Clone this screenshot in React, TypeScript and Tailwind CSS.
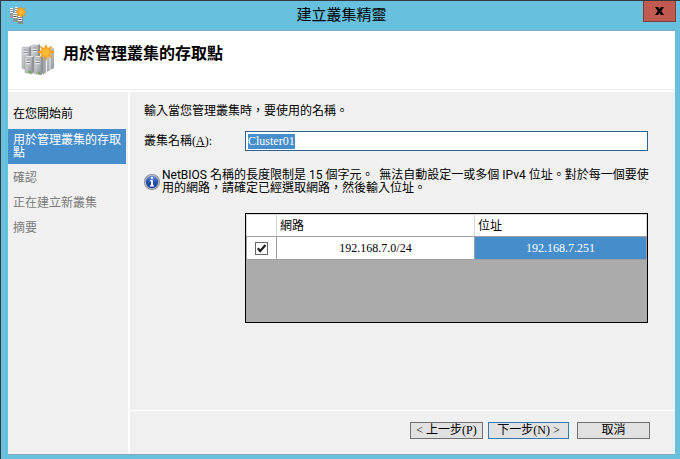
import React, { useEffect, useRef, useState } from "react";

interface Step {
  label: string;
  state: "done" | "current" | "pending";
}

const steps: Step[] = [
  { label: "在您開始前", state: "done" },
  { label: "用於管理叢集的存取點", state: "current" },
  { label: "確認", state: "pending" },
  { label: "正在建立新叢集", state: "pending" },
  { label: "摘要", state: "pending" },
];

const stepStyles = {
  done: "text-black py-1.5",
  current: "bg-[#468dcb] text-white pt-[5px] pb-1 my-0.5",
  pending: "text-[#7a7a7a] py-1.5",
};

interface TowerProps {
  x: number;
  y: number;
  h: number;
}

// One server: light front, darker side, drive bays and a green power light
const Tower: React.FC<TowerProps> = ({ x, y, h }) => (
  <g transform={`translate(${x} ${y})`}>
    <path d="M0 1.5 L2 0 H9 L7 1.5 Z" fill="#e9ebed" />
    <path d={`M7 1.5 L9 0 V${h - 2} L7 ${h} Z`} fill="#8b9095" />
    <path d={`M0 1.5 H7 V${h} L0 ${h - 1.5} Z`} fill="url(#steel)" stroke="#9ca1a5" strokeWidth="0.5" />
    <path d="M1.5 4 H5.5 M1.5 6.5 H5.5" stroke="#7b8187" strokeWidth="0.9" />
    <path d="M1.5 5.2 H5.5 M1.5 7.7 H5.5" stroke="#f7f8f8" strokeWidth="0.8" />
    <circle cx="5" cy={h - 2} r="1" fill="#56b51d" />
  </g>
);

const IconPaints = () => (
  <defs>
    <linearGradient id="steel" x1="0" y1="0" x2="1" y2="1">
      <stop offset="0" stopColor="#dfe1e3" />
      <stop offset="0.5" stopColor="#b9bdc0" />
      <stop offset="1" stopColor="#8b9095" />
    </linearGradient>
    <radialGradient id="spark">
      <stop offset="0" stopColor="#ffc940" />
      <stop offset="0.5" stopColor="#f9a928" />
      <stop offset="1" stopColor="#ec9320" />
    </radialGradient>
  </defs>
);

const ClusterIcon: React.FC<{ className: string }> = ({ className }) => (
  <svg className={className} viewBox="0 0 34 32" aria-hidden="true">
    <Tower x={1} y={2} h={24} />
    <Tower x={10} y={0} h={24} />
    <path d="M19 6 L33 4 V24 L22 30 Z" fill="url(#steel)" />
    <path d="M25.5 12 V28 M29 10 V26" stroke="#e9ebec" strokeWidth="1" />
    <Tower x={4} y={12} h={18} />
    <Tower x={13} y={12} h={19} />
    <path d="M22 13 L24.5 12 V29 L22 31 Z" fill="#a3a7ab" />
    <path
      d="M25 0 L26.8 4 L31.5 1.5 L29.5 6 L34 8 L29.5 10 L31.5 14.5 L26.8 12.2 L25 17 L23 12.2 L18.5 14.5 L20.5 10 L16 8 L20.5 6 L18.5 1.5 L23 4 Z"
      fill="url(#spark)"
    />
  </svg>
);

// Small version for the title bar: towers in two rows, spark at top right
const ClusterIconSmall: React.FC<{ className: string }> = ({ className }) => (
  <svg className={className} viewBox="0 0 16 17" aria-hidden="true">
    <IconPaints />
    <rect x="0" y="1" width="4" height="10" fill="#969ca1" />
    <rect x="5" y="0" width="4" height="8" fill="#969ca1" />
    <rect x="3" y="6" width="5" height="9" fill="#8d9398" />
    <rect x="8" y="8" width="5" height="9" fill="#858b90" />
    <path
      d="M0 1.5 H3 M0 3.5 H3 M0 5.5 H3 M5 0.5 H8 M5 2.5 H8 M5 4.5 H8 M3 6.5 H7 M3 8.5 H7 M3 10.5 H7 M8 9.5 H12 M8 11.5 H12 M8 13.5 H12"
      stroke="#f1f3f4"
      strokeWidth="1"
    />
    <path d="M4 9.5 H6 M9 12.5 H11" stroke="#4d5459" strokeWidth="1" />
    <path d="M6 14.5 H7 M11 16.5 H12" stroke="#6fb53f" strokeWidth="1" />
    <path
      d="M11 0 L12.3 1.5 L15 0.6 L14.7 3.2 L16 5 L14.7 6.8 L15 9.4 L12.3 8.6 L11 10.5 L9.7 8.6 L7 9.4 L7.4 6.8 L6 5 L7.4 3.2 L7 0.6 L9.7 1.5 Z"
      fill="url(#spark)"
    />
  </svg>
);

const InfoIcon = () => (
  <svg className="size-4 shrink-0" viewBox="0 0 16 16" aria-hidden="true">
    <defs>
      <linearGradient id="ball" x1="0" y1="0" x2="0" y2="1">
        <stop offset="0" stopColor="#6f93dc" />
        <stop offset="0.5" stopColor="#2450b4" />
        <stop offset="1" stopColor="#1e3f9c" />
      </linearGradient>
    </defs>
    <circle cx="8" cy="8" r="8" fill="#8b8e94" />
    <circle cx="8" cy="8" r="7.2" fill="#b9bcc1" />
    <circle cx="8" cy="8" r="6.2" fill="url(#ball)" />
    <rect x="7" y="3" width="2" height="2" fill="#fff" />
    <path d="M6 6 H9 V11 H10 V12.5 H6 V11 H7 V7.3 H6 Z" fill="#fff" />
  </svg>
);

const App: React.FC = () => {
  const [name, setName] = useState("Cluster01");
  const [checked, setChecked] = useState(true);
  const nameRef = useRef<HTMLInputElement>(null);

  // The suggested name starts out selected so it can be typed over
  useEffect(() => {
    nameRef.current?.focus();
    nameRef.current?.select();
  }, []);

  return (
    <div className="flex min-h-screen flex-col border-t border-l border-[#38383c] bg-[#67c1de] pr-1 pb-1 pl-[7px] font-['Liberation_Serif','Noto_Sans_CJK_TC',serif] text-xs text-black">
      {/* Title bar */}
      <header className="flex h-[30px] items-start border-b border-[#7fa9bd]">
        <ClusterIconSmall className="mt-1.5 ml-0.5 h-[17px] w-4" />
        <h1 className="flex-1 pt-1 pl-3.5 text-center text-[15px] leading-5">建立叢集精靈</h1>
        <button
          aria-label="關閉"
          className="flex h-[21px] w-[33px] items-center justify-center border border-t-0 border-[#7a3d3a] bg-[#c0594f]"
        >
          <svg className="h-2 w-[9px]" viewBox="0 0 9 8" aria-hidden="true">
            <path d="M0 0 H3 L4.5 2 L6 0 H9 L6.2 4 L9 8 H6 L4.5 6 L3 8 H0 L2.8 4 Z" fill="#000" />
          </svg>
        </button>
      </header>

      <div className="mr-px flex flex-1 flex-col border-b border-[#7fa9bd] bg-[#f0f0f0]">
        <div className="border-b-2 border-white">
          <div className="flex h-[59px] items-start border-b border-[#ececec] bg-white pt-[13px] pl-[13px]">
            <ClusterIcon className="h-8 w-[34px]" />
            <h2 className="pl-2 text-base leading-5 font-bold">用於管理叢集的存取點</h2>
          </div>
        </div>

        <div className="flex flex-1">
          {/* Wizard steps */}
          <nav className="w-[122px] shrink-0 border-r-2 border-white pt-2.5">
            <ol>
              {steps.map((step) => (
                <li key={step.label} className={`mr-0.5 pl-[5px] leading-[13px] ${stepStyles[step.state]}`}>
                  {step.label}
                </li>
              ))}
            </ol>
          </nav>

          <main className="flex min-w-0 flex-1 flex-col">
            <div className="flex-1 pr-[27px] pl-3.5">
              <p className="pt-[11px] leading-4">輸入當您管理叢集時，要使用的名稱。</p>
              <div className="mt-3 flex items-center">
                <label htmlFor="cluster-name" className="w-[101px] shrink-0 leading-4">
                  叢集名稱(<u>A</u>):
                </label>
                <input
                  id="cluster-name"
                  ref={nameRef}
                  value={name}
                  onChange={(e) => setName(e.target.value)}
                  className="h-5 min-w-0 flex-1 border border-[#2f628f] bg-white px-0.5 leading-3 outline-none selection:bg-[#468dcb] selection:text-white"
                />
              </div>

              <div className="mt-[18px] -mr-1 flex items-center gap-0.5">
                <InfoIcon />
                <p className="font-['Roboto','Noto_Sans_CJK_TC',sans-serif] leading-[13px]">
                  NetBIOS 名稱的長度限制是 15 個字元。&nbsp; 無法自動設定一或多個 IPv4 位址。對於每一個要使用的網路，請確定已經選取網路，然後輸入位址。
                </p>
              </div>

              <div className="mt-[18px] ml-[101px] h-[110px] border border-black bg-[#ababab]">
                <table className="w-full table-fixed border-collapse border-t border-[#a0a0a0]">
                  <colgroup>
                    <col className="w-[30px]" />
                    <col className="w-[198px]" />
                    <col />
                  </colgroup>
                  <thead>
                    <tr className="h-[22px] bg-white text-left">
                      <th className="border border-[#d8d8d8] border-b-[#a0a0a0]" aria-label="選取"></th>
                      <th className="border border-[#d8d8d8] border-b-[#a0a0a0] px-[3px] leading-4 font-normal">網路</th>
                      <th className="border border-[#d8d8d8] border-b-[#a0a0a0] px-[3px] leading-4 font-normal">位址</th>
                    </tr>
                  </thead>
                  <tbody>
                    <tr className="h-[23px] bg-white text-center">
                      <td className="border border-[#a0a0a0]">
                        <label className="relative mx-auto block size-[13px]">
                          <input
                            type="checkbox"
                            aria-label="192.168.7.0/24"
                            checked={checked}
                            onChange={(e) => setChecked(e.target.checked)}
                            className="block size-[13px] appearance-none border border-[#666] bg-white"
                          />
                          {checked && (
                            <svg className="pointer-events-none absolute inset-0 size-[13px]" viewBox="0 0 13 13" aria-hidden="true">
                              <path d="M2.8 6.3 L5.2 9 L10.5 3" fill="none" stroke="#222" strokeWidth="2.2" />
                            </svg>
                          )}
                        </label>
                      </td>
                      <td className="border border-[#a0a0a0] leading-4">192.168.7.0/24</td>
                      <td className="border border-[#a0a0a0] bg-[#468dcb] leading-4 text-white">192.168.7.251</td>
                    </tr>
                  </tbody>
                </table>
              </div>
            </div>

            <footer className="flex justify-end border-t border-white pt-[11px] pr-[25px] pb-[15px]">
              <button className="h-[17px] w-[73px] border border-[#707070] bg-[#e1e1e1] leading-[15px]">
                &lt; 上一步(P)
              </button>
              <button className="ml-[5px] h-[17px] w-[81px] border border-[#2f7cb5] bg-[#e1e1e1] leading-[15px]">
                下一步(N) &gt;
              </button>
              <button className="ml-2 h-[17px] w-[73px] border border-[#707070] bg-[#e1e1e1] leading-[15px]">
                取消
              </button>
            </footer>
          </main>
        </div>
      </div>
    </div>
  );
};

export default App;
